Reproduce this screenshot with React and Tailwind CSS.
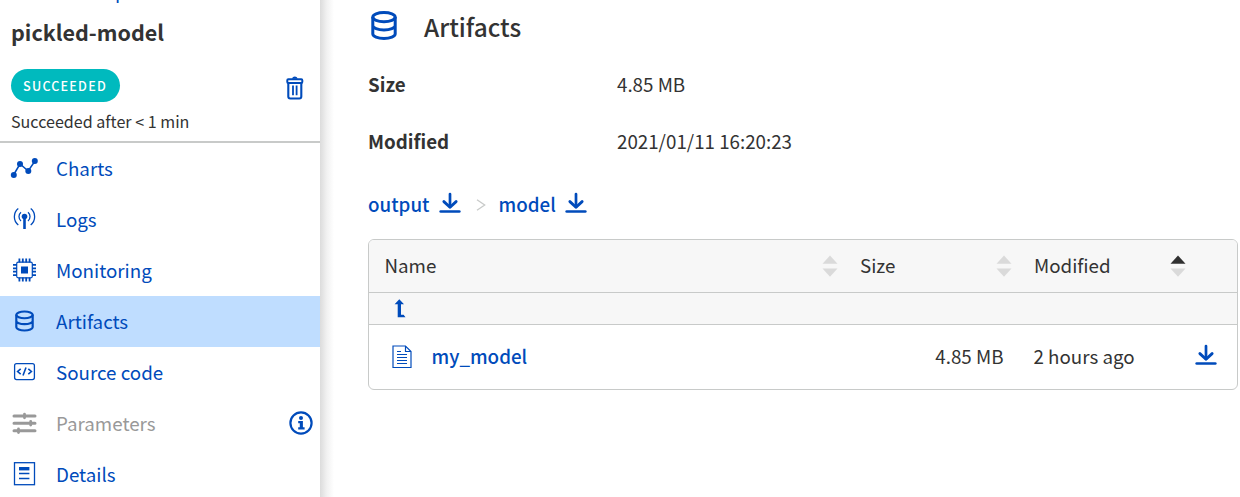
import React from "react";

const BLUE = "#004bbb";

function ChartsIcon() {
  return (
    <svg width="28" height="24" viewBox="0 0 28 24" fill={BLUE} stroke={BLUE}>
      <path d="M3.500 19 10 8l8.200 7L25 5" fill="none" strokeWidth="1.500" />
      <g stroke="none">
        <circle cx="3.800" cy="19" r="3" />
        <circle cx="10" cy="8" r="3" />
        <circle cx="18.300" cy="15" r="3" />
        <circle cx="24.800" cy="5" r="3" />
      </g>
    </svg>
  );
}

function LogsIcon() {
  return (
    <svg width="28" height="24" viewBox="0 0 28 24" fill="none" stroke={BLUE}>
      <circle cx="14.500" cy="9.500" r="2.800" fill={BLUE} stroke="none" />
      <path d="M14.500 10v12" strokeWidth="2.600" />
      <path d="M11 5.200a5.800 5.800 0 0 0 0 8.800M18 5.200a5.800 5.800 0 0 1 0 8.800" strokeWidth="1.300" />
      <path d="M8.300 1.500a10.500 10.500 0 0 0 0 16.400M20.700 1.500a10.500 10.500 0 0 1 0 16.400" strokeWidth="1.300" />
    </svg>
  );
}

function ChipIcon() {
  return (
    <svg width="28" height="24" viewBox="0 0 28 24" fill="none" stroke={BLUE}>
      <rect x="6.700" y="4.200" width="15.600" height="15.600" rx="1.500" strokeWidth="1.200" />
      <rect x="11" y="8.500" width="7" height="7" fill={BLUE} stroke="none" />
      <path
        d="M9.400 .5v4M12.800 .5v4M16.200 .5v4M19.600 .5v4M9.400 19.500v4M12.800 19.500v4M16.200 19.500v4M19.600 19.500v4M3 6.900h4M3 10.300h4M3 13.700h4M3 17.100h4M22 6.900h4M22 10.300h4M22 13.700h4M22 17.100h4"
        strokeWidth="1.800"
      />
    </svg>
  );
}

function DatabaseIcon({ className }) {
  return (
    <svg className={className} viewBox="0 0 26 29" fill="none" stroke={BLUE} strokeWidth="3">
      <ellipse cx="13" cy="6.100" rx="11.200" ry="4.600" />
      <path d="M1.800 6v17c0 2.400 5 4.500 11.200 4.500s11.200-2.100 11.200-4.500V6M1.800 14.500c0 2.400 5 4.400 11.200 4.400s11.200-2 11.200-4.400" />
    </svg>
  );
}

function CodeIcon() {
  return (
    <svg width="28" height="24" viewBox="0 0 28 24" fill="none" stroke={BLUE}>
      <rect x="4.600" y="3.600" width="19.800" height="16" rx="2" strokeWidth="1.300" />
      <path d="M10.700 8.800 7.600 11.500l3.100 2.700M18.300 8.800l3.100 2.700-3.100 2.700M16 7.500l-3 8" strokeWidth="1.600" />
    </svg>
  );
}

function SlidersIcon() {
  return (
    <svg width="28" height="24" viewBox="0 0 28 24" fill="none" stroke="#999999" strokeLinecap="round">
      <path d="M4 5h21M4 12.300h21M4 19.800h21" strokeWidth="3" />
      <path d="M14.500 3.200v3.600M20.700 10.500v3.600M8.500 18v3.600" strokeWidth="2.800" />
    </svg>
  );
}

function DetailsIcon() {
  return (
    <svg width="28" height="24" viewBox="0 0 28 24" fill="none" stroke={BLUE}>
      <rect x="4.500" y=".7" width="20" height="22" strokeWidth="1.300" />
      <path d="M9 6.700h10.400" strokeWidth="3.400" />
      <path d="M9 11.500h10.400M9 16.500h10.400" strokeWidth="1.300" />
    </svg>
  );
}

function InfoIcon() {
  return (
    <svg width="24" height="24" viewBox="0 0 24 24" fill={BLUE}>
      <circle cx="12" cy="12" r="10.600" fill="none" stroke={BLUE} strokeWidth="2.200" />
      <circle cx="12" cy="7" r="2" />
      <path d="M9.200 10h4.700v6.300h1.700v2.300H9.200v-2.300h1.600v-4.100H9.200z" />
    </svg>
  );
}

function TrashIcon() {
  return (
    <svg width="18" height="24" viewBox="0 0 18 24" fill="none" stroke={BLUE}>
      <rect x="1.300" y="3.300" width="15" height="3.700" rx="1" strokeWidth="2" />
      <path d="M6 2.800C6.400 1.300 7.500.6 8.800.6s2.400.7 2.800 2.200z" fill={BLUE} stroke="none" />
      <path d="M2.300 7v13.500a2 2 0 0 0 2 2h9a2 2 0 0 0 2-2V7" strokeWidth="2.100" />
      <path d="M7 9.500v9.700M10.600 9.500v9.700" strokeWidth="1.800" />
    </svg>
  );
}

function DownloadIcon() {
  return (
    <svg width="22" height="22" viewBox="0 0 22 22" fill="none" stroke={BLUE} strokeLinecap="round" strokeLinejoin="round">
      <path d="M11 2v13" strokeWidth="2.700" />
      <path d="M4.900 9.600 11 15.300l6.100-5.700" strokeWidth="2.900" />
      <path d="M1.700 19.500h18.600" strokeWidth="2.700" />
    </svg>
  );
}

function FileIcon() {
  return (
    <svg width="20" height="24" viewBox="0 0 20 24" fill="none" stroke={BLUE}>
      <path d="M1 1h12.500L19 6.500V22.500H1zM13.500 1v5.500H19" strokeWidth="1.200" />
      <path d="M5 6.500h4M5 9.500h10M5 12.500h10M5 15.500h10M5 18.500h10" strokeWidth="1.200" />
    </svg>
  );
}

function UpIcon() {
  return (
    <svg width="12" height="19" viewBox="0 0 12 19" fill={BLUE}>
      <path d="M5.300.3 10 5.300H7v10.500h2.600l1.900 2.400H3.700V5.300H.6z" />
    </svg>
  );
}

function SortIcon({ active }) {
  return (
    <svg width="16" height="22" viewBox="0 0 16 22">
      <path d="M8 .5 15.500 8.700H.5z" fill={active ? "#303030" : "#dadada"} />
      <path d="M.5 13.500h15L8 21.700z" fill="#dadada" />
    </svg>
  );
}

const items = [
  { label: "Charts", icon: <ChartsIcon /> },
  { label: "Logs", icon: <LogsIcon /> },
  { label: "Monitoring", icon: <ChipIcon /> },
  { label: "Artifacts", icon: <DatabaseIcon className="ml-[5px] h-[22px] w-[19px]" />, selected: true },
  { label: "Source code", icon: <CodeIcon /> },
  { label: "Parameters", icon: <SlidersIcon />, disabled: true },
  { label: "Details", icon: <DetailsIcon /> },
];

function NavItem({ label, icon, selected, disabled }) {
  return (
    <li className={`flex h-[51px] shrink-0 items-center pl-[10px] pr-[7px] ${selected ? "bg-[#bfddff]" : ""}`}>
      <span className="flex h-6 w-7 shrink-0 items-center pb-[2px]">{icon}</span>
      <a className={`ml-[18px] flex-1 pb-[2px] text-[18.750px] leading-[49px] ${disabled ? "text-[#999999]" : "text-[#004bbb]"}`}>
        {label}
      </a>
      {disabled && <span className="pb-[2px]"><InfoIcon /></span>}
    </li>
  );
}

function Sidebar() {
  return (
    <aside className="flex w-[320px] shrink-0 flex-col">
      <header className="flex h-[143px] shrink-0 flex-col border-b-2 border-[#c8cac9] pl-[11px]">
        <div className="h-[14px] overflow-hidden pl-[104px] text-[18.750px] leading-none text-[#004bbb]">
          <span className="-mt-[19px] block">p</span>
        </div>
        <h1 className="-mt-px h-[38px] text-[21.500px] font-bold leading-[38px]">pickled-model</h1>
        <div className="mt-[18px] flex items-center justify-between pr-[16px]">
          <span className="h-[33px] w-[109px] rounded-full bg-[#00babe] pr-px text-center text-[12.600px] font-medium leading-[33px] tracking-[1.200px] text-white">
            SUCCEEDED
          </span>
          <span className="pt-1"><TrashIcon /></span>
        </div>
        <p className="mt-[5px] text-[16.100px] leading-[28px]">Succeeded after &lt; 1 min</p>
      </header>
      <ul className="flex flex-col">
        {items.map((item) => (
          <NavItem key={item.label} {...item} />
        ))}
      </ul>
    </aside>
  );
}

function ColumnHead({ label, active, className }) {
  return (
    <div className={`flex items-center justify-between ${className}`}>
      <span className="pb-[2px]">{label}</span>
      <SortIcon active={active} />
    </div>
  );
}

export default function App() {
  return (
    <div className="flex h-[497px] w-[1240px] overflow-hidden bg-white font-['Source_Sans_Pro','Noto_Sans_CJK_JP',sans-serif] text-[#333333]">
      <Sidebar />
      <div className="w-[14px] shrink-0 bg-linear-to-r from-[#dcdcdc] via-[#f2f2f2] to-white" />
      <main className="flex flex-1 flex-col pl-[34px] pr-[2px] text-[18.750px]">
        <div className="flex h-[55px] items-center pl-[3px]">
          <DatabaseIcon className="mb-[4px] h-[29px] w-[26px]" />
          <h2 className="ml-[27px] pb-px text-[24.400px] font-medium leading-[54px]">Artifacts</h2>
        </div>
        <dl className="mb-px grid grid-cols-[249px_1fr] leading-[57px]">
          <dt className="font-bold">Size</dt>
          <dd>4.85 MB</dd>
          <dt className="font-bold">Modified</dt>
          <dd>2021/01/11 16:20:23</dd>
        </dl>
        <nav className="flex h-[69px] items-center font-medium text-[#004bbb]">
          <a className="w-[70.500px]">output</a>
          <span className="pb-1"><DownloadIcon /></span>
          <svg className="ml-[15px] mr-[13px]" width="10" height="12" viewBox="0 0 10 12" fill="none" stroke="#c8cac9" strokeWidth="1.300">
            <path d="M1 .7 8.700 6 1 11.300" />
          </svg>
          <a className="w-[66px]">model</a>
          <span className="pb-1"><DownloadIcon /></span>
        </nav>
        <section className="flex h-[151px] flex-col overflow-hidden rounded-md border border-[#c8cac9]">
          <div className="flex h-[53px] shrink-0 items-center border-b border-[#c8cac9] bg-[#f7f7f7] pl-[15.500px]">
            <ColumnHead label="Name" className="w-[453px]" />
            <ColumnHead label="Size" className="ml-[22.500px] w-[151.500px]" />
            <ColumnHead label="Modified" active className="ml-[22.500px] w-[151.500px]" />
          </div>
          <div className="flex h-[32px] shrink-0 items-center border-b border-[#c8cac9] bg-[#f7f7f7] pl-[25px]">
            <UpIcon />
          </div>
          <div className="flex h-[64px] items-center pl-[23px] pr-[20px]">
            <FileIcon />
            <a className="ml-[19.500px] flex-1 pb-[2px] font-medium text-[#004bbb]">my_model</a>
            <span className="mr-[30px] pb-[2px]">4.85 MB</span>
            <span className="w-[161.500px] pb-[2px]">2 hours ago</span>
            <span className="pb-1"><DownloadIcon /></span>
          </div>
        </section>
      </main>
    </div>
  );
}
